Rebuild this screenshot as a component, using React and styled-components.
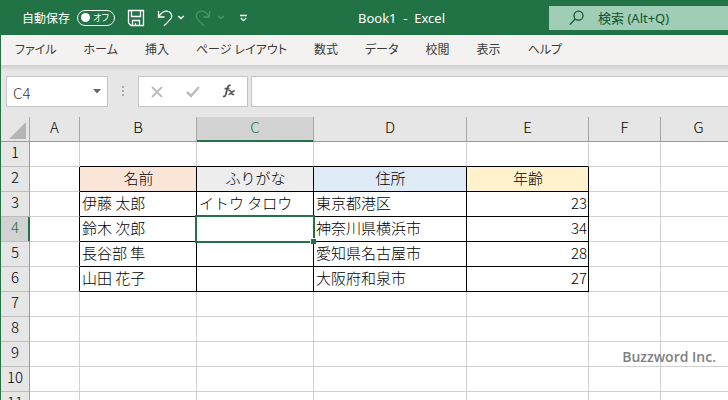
import React from "react";
import styled, { createGlobalStyle, css } from "styled-components";

const GREEN = "#217346";
const UI_FONT = `"Noto Sans", "Noto Sans CJK JP", sans-serif`;
const SHEET_FONT = `"Noto Sans CJK JP", sans-serif`;

const GlobalStyle = createGlobalStyle`
  *, *::before, *::after { box-sizing: border-box; }
  html, body, #root { height: 100%; }
  body { margin: 0; overflow: hidden; background: #fff; }
  button, input { font: inherit; color: inherit; margin: 0; }
`;

const Window = styled.div`
  display: flex;
  flex-direction: column;
  height: 100%;
  overflow: hidden;
  background: #e6e6e6;
  font-family: ${UI_FONT};
`;

const TitleBar = styled.header`
  display: grid;
  grid-template-columns: 1fr auto 1fr;
  column-gap: 104px;
  align-items: center;
  flex: none;
  height: 35px;
  background: ${GREEN};
  color: #fff;
  font-size: 12px;
`;

const QuickAccess = styled.div`
  display: flex;
  align-items: center;
  padding-left: 22px;
  width: 254px;
`;

const AutoSave = styled.label`
  display: flex;
  align-items: center;
  gap: 7px;
  white-space: nowrap;
`;

const Switch = styled.button`
  display: flex;
  align-items: center;
  justify-content: space-between;
  width: 38px;
  height: 16px;
  padding: 0 5px 0 3px;
  border: 1px solid #fff;
  border-radius: 8px;
  background: none;
  font-size: 9px;
  line-height: 12px;
  font-feature-settings: "palt";
`;

const Knob = styled.span`
  width: 9px;
  height: 9px;
  border-radius: 50%;
  background: #fff;
`;

const IconButton = styled.button`
  display: flex;
  align-items: center;
  justify-content: center;
  flex: none;
  width: ${(p) => p.$width}px;
  height: 24px;
  padding: 0;
  border: 0;
  background: none;
  color: ${(p) => p.$color || "#fff"};
`;

const DocTitle = styled.h1`
  margin: 0;
  font-size: 13px;
  font-weight: 400;
  white-space: pre;
`;

const SearchBox = styled.label`
  display: flex;
  align-items: center;
  gap: 14px;
  height: 24px;
  min-width: 0;
  padding-left: 20px;
  background: #a0cdb5;
  color: #10532f;
`;

const SearchInput = styled.input`
  flex: 1;
  min-width: 0;
  padding: 0;
  border: 0;
  background: none;
  font-size: 13px;
  outline: none;
  &::placeholder { color: #10532f; opacity: 1; }
`;

const Body = styled.main`
  flex: 1;
  min-height: 0;
  display: flex;
  flex-direction: column;
  border-left: 1px solid ${GREEN};
`;

const MenuBar = styled.nav`
  display: flex;
  align-items: center;
  gap: 27px;
  flex: none;
  height: 30px;
  padding-left: 14px;
  background: #f3f2f1;
`;

const MenuItem = styled.button`
  padding: 0;
  border: 0;
  background: none;
  color: #3b3a39;
  font-size: 12px;
  line-height: 20px;
  white-space: nowrap;
  font-feature-settings: "palt";
`;

const FormulaBar = styled.div`
  display: flex;
  flex: none;
  height: 52px;
  padding: 11px 0 10px 5px;
  background: linear-gradient(#cfcfcf, #e6e6e6 6px);
`;

const Box = styled.div`
  display: flex;
  align-items: center;
  flex: none;
  width: ${(p) => p.$width}px;
  border: 1px solid #c6c6c6;
  background: #fff;
`;

const NameInput = styled.input`
  flex: 1;
  min-width: 0;
  padding: 2px 0 0 6px;
  border: 0;
  background: none;
  color: #333;
  font-family: ${SHEET_FONT};
  font-size: 15px;
  font-weight: 300;
  line-height: 20px;
  outline: none;
`;

const Grip = styled.svg`
  flex: none;
  width: 30px;
  height: 31px;
`;

const FormulaInput = styled.input`
  flex: 1;
  min-width: 0;
  margin-left: 3px;
  border: 1px solid #c6c6c6;
  border-right: 0;
  background: #fff;
  outline: none;
`;

const SheetArea = styled.div`
  position: relative;
  flex: 1;
  min-height: 0;
  overflow: hidden;
  background: #fff;
`;

const Sheet = styled.table`
  width: 736px;
  min-width: 100%;
  table-layout: fixed;
  border-collapse: separate;
  border-spacing: 0;
  font-family: ${SHEET_FONT};
  font-size: 15px;
  font-weight: 300;
  line-height: 22px;
  color: #000;
`;

const Col = styled.col`
  width: ${(p) => (p.$width ? `${p.$width}px` : "auto")};
`;

const headerBase = css`
  height: 25px;
  padding: 0 0 4px;
  font-weight: 300;
  text-align: center;
  line-height: 20px;
  background: #e6e6e6;
  overflow: hidden;
`;

const ColumnHeader = styled.th`
  ${headerBase}
  border-right: 1px solid #a6a6a6;
  border-bottom: 1px solid #999;
  ${(p) => p.$active && css`
    background: #d2d2d2;
    color: ${GREEN};
    box-shadow: inset 0 -1px ${GREEN};
    border-bottom-color: ${GREEN};
  `}
`;

const Corner = styled.td`
  ${headerBase}
  padding: 2px 3px 0 0;
  border-right: 1px solid #a6a6a6;
  border-bottom: 1px solid #999;
  svg { display: block; margin-left: auto; }
`;

const RowHeader = styled.th`
  ${headerBase}
  border-right: 1px solid #999;
  border-bottom: 1px solid #bdbdbd;
  ${(p) => p.$active && css`
    background: #d2d2d2;
    color: ${GREEN};
    box-shadow: inset -1px 0 ${GREEN};
    border-right-color: ${GREEN};
  `}
`;

const Cell = styled.td`
  position: relative;
  height: 25px;
  padding: 0 1px 2px 2px;
  border-right: 1px solid ${(p) => (p.$right ? "#000" : "#d0d0d0")};
  border-bottom: 1px solid ${(p) => (p.$bottom ? "#000" : "#d0d0d0")};
  background: ${(p) => p.$fill || "#fff"};
  text-align: ${(p) => p.$align || "left"};
  white-space: nowrap;
`;

const Selection = styled.div`
  position: absolute;
  z-index: 1;
  inset: -2px;
  border: 2px solid ${GREEN};
  &::after {
    content: "";
    position: absolute;
    right: -3px;
    bottom: -3px;
    width: 6px;
    height: 6px;
    background: ${GREEN};
    border: solid #fff;
    border-width: 1px 0 0 1px;
  }
`;

const Watermark = styled.div`
  position: absolute;
  right: 12px;
  bottom: 33px;
  z-index: 2;
  color: #808080;
  font-family: "Open Sans", sans-serif;
  font-size: 14px;
  font-weight: 600;
  line-height: 20px;
`;

const Icon = ({ w, h, children, ...rest }) => (
  <svg width={w} height={h} viewBox={`0 0 ${w} ${h}`} fill="none" stroke="currentColor" strokeWidth="1.3" aria-hidden="true" {...rest}>
    {children}
  </svg>
);

const SaveIcon = () => (
  <Icon w={18} h={18}>
    <path d="M1.5 1.5h15v15h-12.500l-2.500-2.500zM4.500 1.500v6h9v-6M5.500 16.500v-5h7v5M8.500 16v-2" />
  </Icon>
);
const UndoIcon = () => (
  <Icon w={16} h={18}>
    <path d="M1.500 2v6h6M1.800 7.700C4 4 7 2 10 2.200c3.500.3 5 3 4.600 5.800-.3 2-1.500 3.200-7.600 8.800" />
  </Icon>
);
const RedoIcon = () => (
  <Icon w={16} h={18}>
    <path d="M14.500 2v6h-6M14.200 7.700C12 4 9 2 6 2.200c-3.500.3-5 3-4.600 5.800.3 2 1.500 3.200 7.600 8.800" />
  </Icon>
);
const ChevronIcon = () => (
  <Icon w={8} h={5} strokeWidth="1.500"><path d="M1.200 1l2.800 2.600L6.800 1" /></Icon>
);
const CustomizeIcon = () => (
  <Icon w={9} h={8}><path d="M1 1.500h7M1.800 4l2.700 2.600L7.200 4" /></Icon>
);
const SearchIcon = () => (
  <Icon w={15} h={16}><circle cx="9.500" cy="5.700" r="4.500" /><path d="M6.300 9L.8 14.600" /></Icon>
);
const FxIcon = () => (
  <Icon w={14} h={15} stroke="#555">
    <path d="M8.600 1.700C7.300.8 6.300 1.400 5.700 3.300L3.700 10.800c-.5 1.700-1.400 2-2.600 1.200M2.600 4.700h4.800" strokeWidth="1.800" />
    <path d="M6.500 6.800c1.700-.8 2.200 0 2.900 2 .6 1.700 1.200 2.200 2.600 1.300M12.700 6.700c-1.500-.2-2.800 1.600-3.500 2.400-.9 1.100-1.600 1.400-2.700 1.100" strokeWidth="1.600" />
  </Icon>
);

const MENUS = ["ファイル", "ホーム", "挿入", "ページ レイアウト", "数式", "データ", "校閲", "表示", "ヘルプ"];

const COLUMNS = [
  { id: "A", width: 50 },
  { id: "B", width: 117 },
  { id: "C", width: 117 },
  { id: "D", width: 153 },
  { id: "E", width: 122 },
  { id: "F", width: 72 },
  { id: "G" },
];

const DATA = {
  2: { B: "名前", C: "ふりがな", D: "住所", E: "年齢" },
  3: { B: "伊藤 太郎", C: "イトウ タロウ", D: "東京都港区", E: "23" },
  4: { B: "鈴木 次郎", D: "神奈川県横浜市", E: "34" },
  5: { B: "長谷部 隼", D: "愛知県名古屋市", E: "28" },
  6: { B: "山田 花子", D: "大阪府和泉市", E: "27" },
};

const FILLS = { B: "#fbe5d8", C: "#ededed", D: "#deebf7", E: "#fff2cc" };
const ROWS = Array.from({ length: 11 }, (_, i) => i + 1);
const ACTIVE = { row: 4, col: "C" };

function SheetCell({ row, col }) {
  const inTableRow = row >= 2 && row <= 6;
  const tableCol = "BCDE".includes(col);
  const header = row === 2 && tableCol;
  let align = "left";
  if (header) align = "center";
  else if (col === "E") align = "right";
  return (
    <Cell
      $right={inTableRow && "ABCDE".includes(col)}
      $bottom={tableCol && row <= 6}
      $fill={header ? FILLS[col] : undefined}
      $align={align}
    >
      {DATA[row]?.[col]}
      {row === ACTIVE.row && col === ACTIVE.col && <Selection />}
    </Cell>
  );
}

export default function App() {
  return (
    <Window>
      <GlobalStyle />
      <TitleBar>
        <QuickAccess>
          <AutoSave htmlFor="autosave">
            自動保存
            <Switch id="autosave" type="button" role="switch" aria-checked="false">
              <Knob />
              オフ
            </Switch>
          </AutoSave>
          <IconButton $width={42} type="button" aria-label="上書き保存"><SaveIcon /></IconButton>
          <IconButton $width={16} type="button" aria-label="元に戻す"><UndoIcon /></IconButton>
          <IconButton $width={16} type="button" aria-label="元に戻す一覧"><ChevronIcon /></IconButton>
          <IconButton $width={28} $color="#4b946b" type="button" aria-label="やり直し"><RedoIcon /></IconButton>
          <IconButton $width={8} $color="#4b946b" type="button" aria-label="やり直し一覧"><ChevronIcon /></IconButton>
          <IconButton $width={36} type="button" aria-label="ツール バーのカスタマイズ"><CustomizeIcon /></IconButton>
        </QuickAccess>
        <DocTitle>{"Book1  -  Excel"}</DocTitle>
        <SearchBox>
          <SearchIcon />
          <SearchInput type="text" placeholder="検索 (Alt+Q)" aria-label="検索" />
        </SearchBox>
      </TitleBar>
      <Body>
        <MenuBar>
          {MENUS.map((m) => <MenuItem key={m} type="button">{m}</MenuItem>)}
        </MenuBar>
        <FormulaBar>
          <Box $width={102}>
            <NameInput aria-label="名前ボックス" defaultValue="C4" />
            <IconButton $width={20} $color="#666" type="button" aria-label="名前の一覧">
              <Icon w={8} h={5} stroke="none"><path d="M0 0h8L4 4.500z" fill="currentColor" /></Icon>
            </IconButton>
          </Box>
          <Grip viewBox="0 0 30 31" fill="#aaa" aria-hidden="true">
            <path d="M14 10h2v2h-2zM14 14h2v2h-2zM14 18h2v2h-2z" />
          </Grip>
          <Box $width={110}>
            <IconButton $width={36} $color="#bcbcbc" type="button" aria-label="キャンセル">
              <Icon w={12} h={12} strokeWidth="1.800"><path d="M1 1l10 10M11 1L1 11" /></Icon>
            </IconButton>
            <IconButton $width={36} $color="#bcbcbc" type="button" aria-label="入力">
              <Icon w={14} h={12} strokeWidth="2.500"><path d="M1 6l4 4L13 1" /></Icon>
            </IconButton>
            <IconButton $width={36} type="button" aria-label="関数の挿入"><FxIcon /></IconButton>
          </Box>
          <FormulaInput type="text" aria-label="数式バー" />
        </FormulaBar>
        <SheetArea>
          <Sheet>
            <colgroup>
              <Col $width={29} />
              {COLUMNS.map((c) => <Col key={c.id} $width={c.width} />)}
            </colgroup>
            <thead>
              <tr>
                <Corner>
                  <Icon w={17} h={17} stroke="none"><path d="M17 0v17H0z" fill="#b4b4b4" /></Icon>
                </Corner>
                {COLUMNS.map((c) => (
                  <ColumnHeader key={c.id} scope="col" $active={c.id === ACTIVE.col}>{c.id}</ColumnHeader>
                ))}
              </tr>
            </thead>
            <tbody>
              {ROWS.map((r) => (
                <tr key={r}>
                  <RowHeader scope="row" $active={r === ACTIVE.row}>{r}</RowHeader>
                  {COLUMNS.map((c) => <SheetCell key={c.id} row={r} col={c.id} />)}
                </tr>
              ))}
            </tbody>
          </Sheet>
          <Watermark>Buzzword Inc.</Watermark>
        </SheetArea>
      </Body>
    </Window>
  );
}
